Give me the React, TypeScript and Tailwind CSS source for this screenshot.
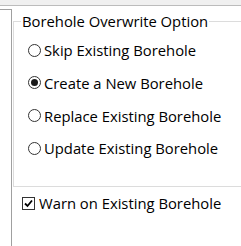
const options = [
  { label: "Skip Existing Borehole", checked: false },
  { label: "Create a New Borehole", checked: true },
  { label: "Replace Existing Borehole", checked: false },
  { label: "Update Existing Borehole", checked: false },
];

function Radio({ checked }: { checked: boolean }) {
  return (
    <span className="flex h-[13px] w-[13px] shrink-0 items-center justify-center rounded-full border border-[#333333] bg-white">
      {checked ? <span className="h-[7px] w-[7px] rounded-full bg-[#1a1a1a]" /> : null}
    </span>
  );
}

function CheckBox() {
  return (
    <span className="flex h-[13px] w-[13px] shrink-0 items-center justify-center border border-[#333333] bg-white">
      <svg width="9" height="9" viewBox="0 0 9 9">
        <path d="M1 4.5 L3.5 7 L8 1.5" fill="none" stroke="#000" strokeWidth="1.8" />
      </svg>
    </span>
  );
}

export default function App() {
  return (
    <div className="flex h-[246px] w-[241px] flex-col overflow-hidden bg-white font-['Open_Sans','Noto_Sans',sans-serif] text-[14.8px] text-black">
      <div className="h-[6px] border-b border-[#bcbcbc] bg-[#f0f0f0]" />
      <div className="flex flex-1 pt-[3px]">
        <div className="w-[12px] shrink-0 border-t border-r border-[#a0a0a0]" />
        <div className="flex-1 pl-[1px]">
          <fieldset className="mt-[2px] mr-[-20px] h-[176px] border-t border-b border-l border-[#dcdcdc]">
            <legend className="ml-[7px] px-[1px] leading-[20px]">Borehole Overwrite Option</legend>
            <div className="flex flex-col pt-[3px] pl-[14px]">
              {options.map((o) => (
                <div key={o.label} className="flex h-[32.67px] items-center gap-[3px]">
                  <Radio checked={o.checked} />
                  <span className="leading-[20px]">{o.label}</span>
                </div>
              ))}
            </div>
          </fieldset>
          <div className="mt-[6px] flex h-[20px] items-center gap-[4px] pl-[9px]">
            <CheckBox />
            <span className="leading-[20px]">Warn on Existing Borehole</span>
          </div>
        </div>
      </div>
    </div>
  );
}
